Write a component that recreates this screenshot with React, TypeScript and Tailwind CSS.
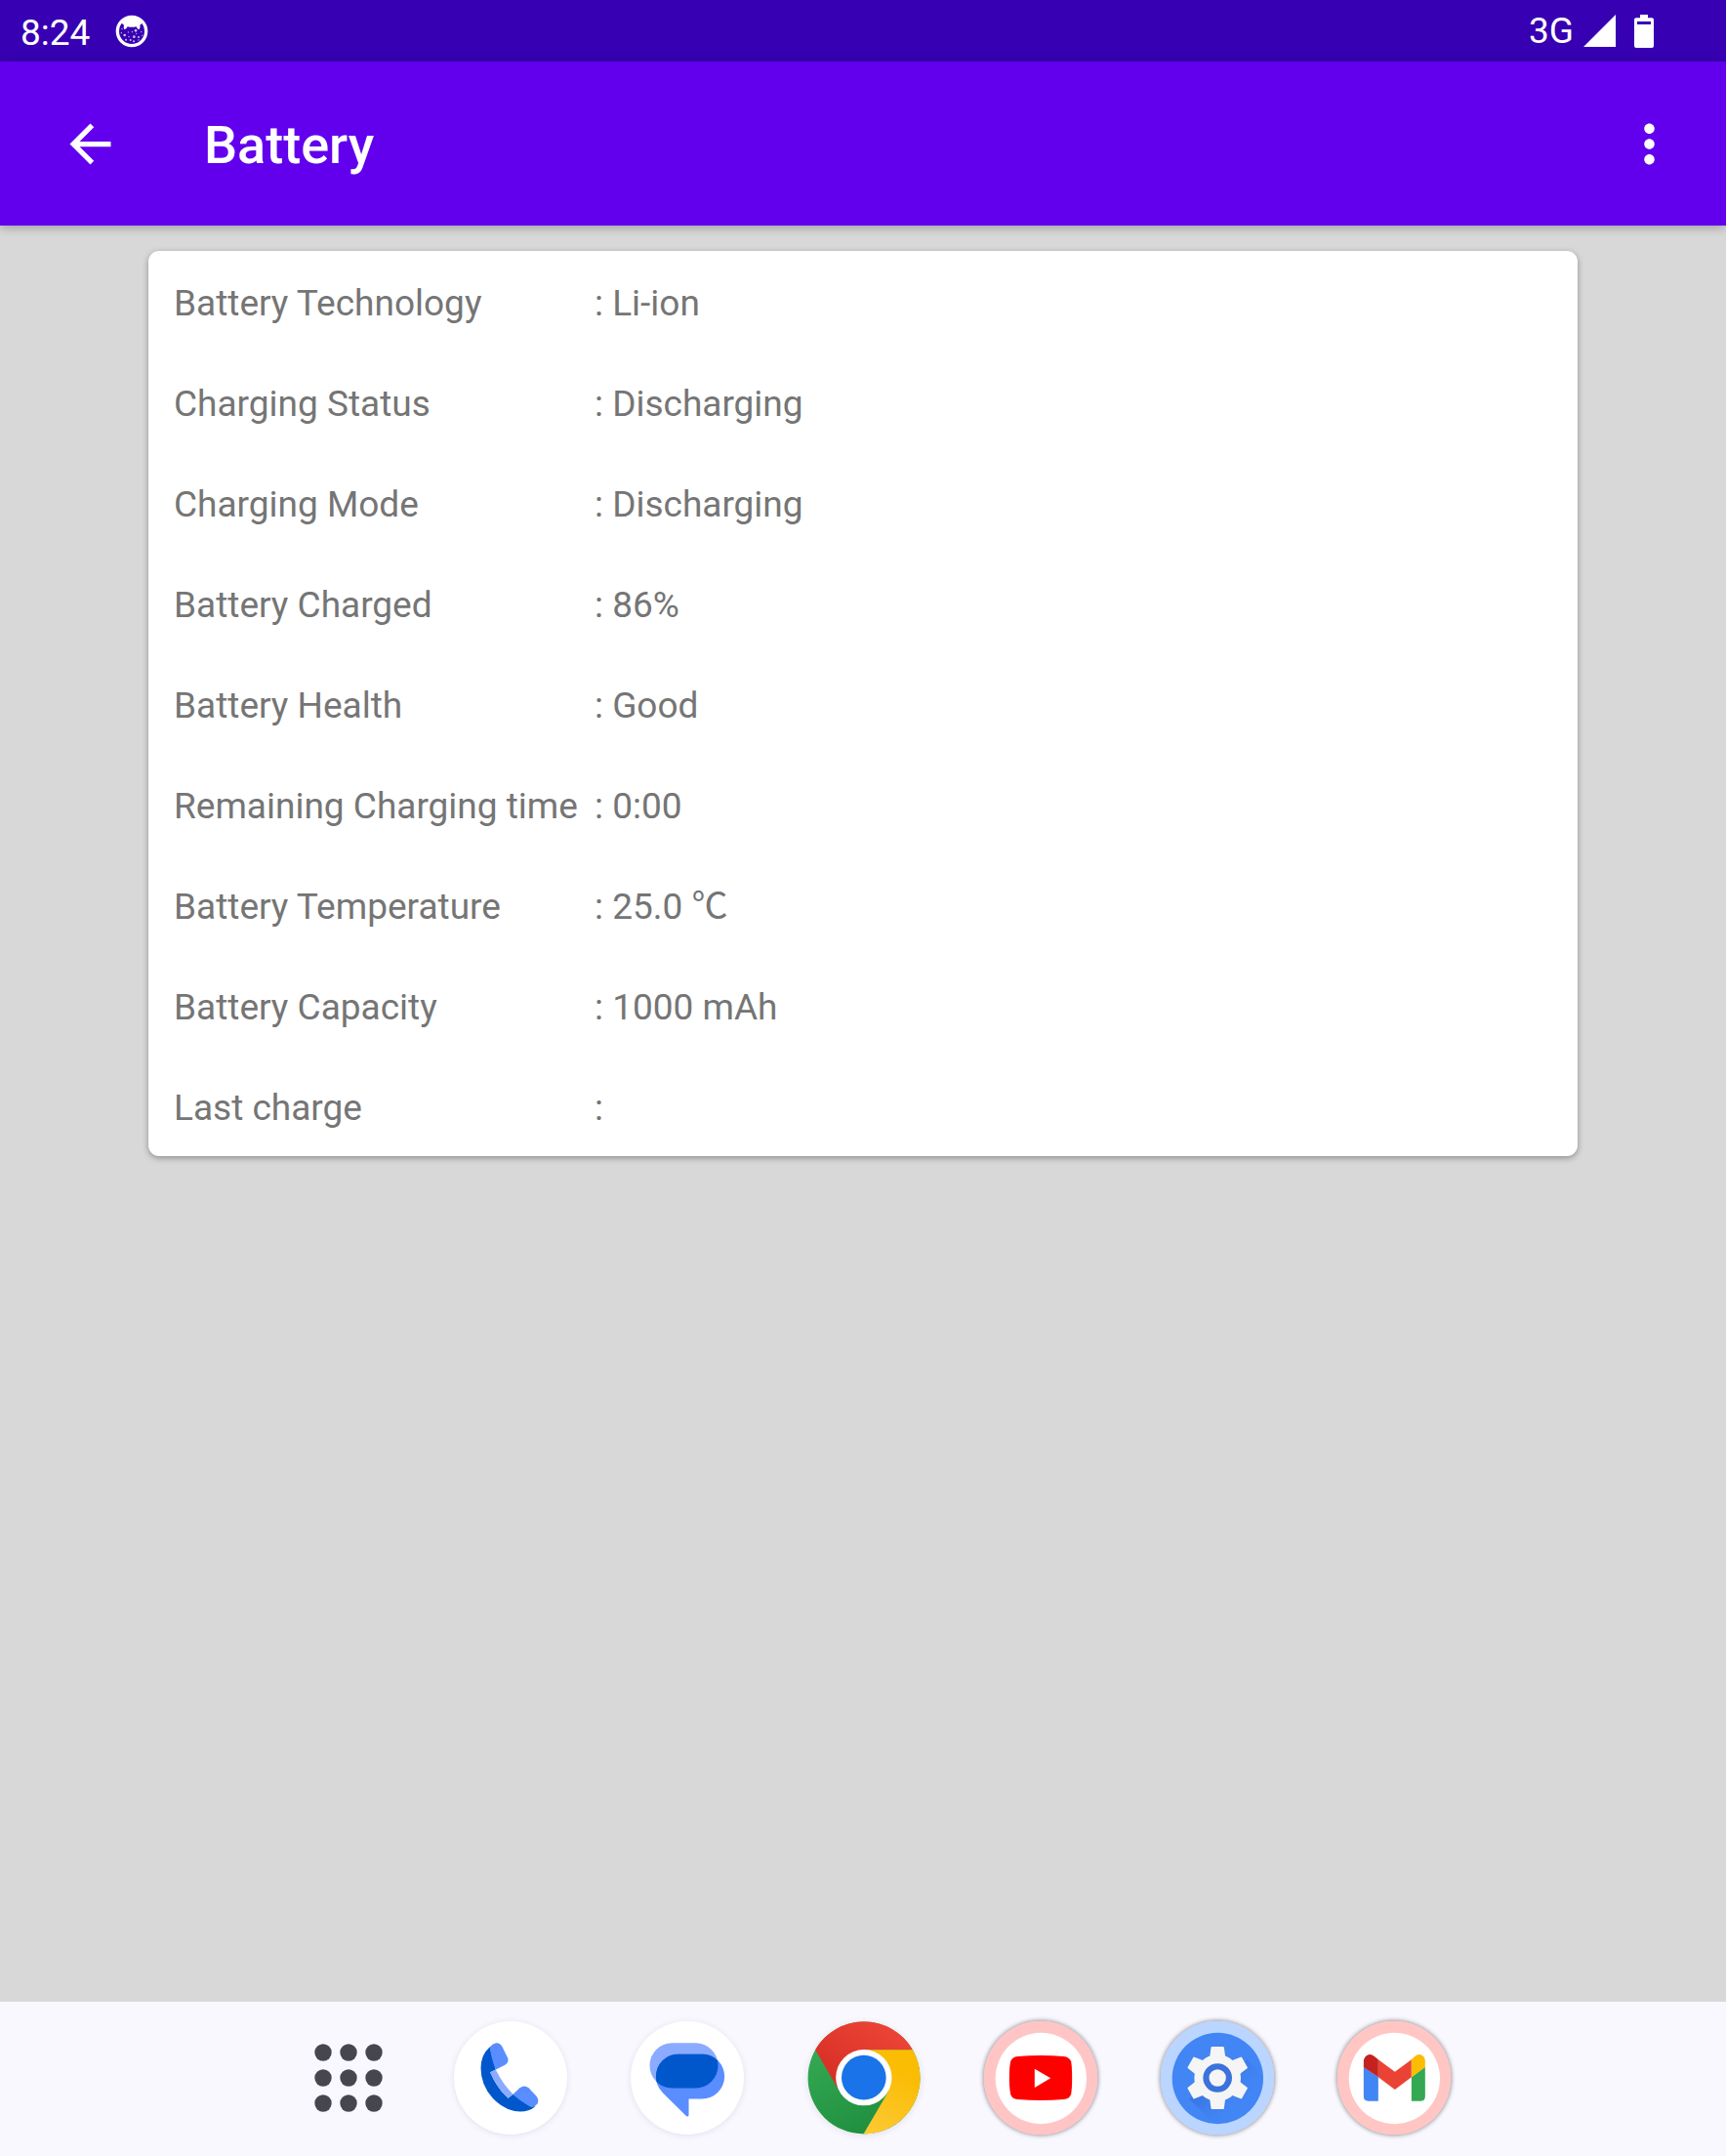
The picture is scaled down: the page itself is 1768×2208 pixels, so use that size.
import type { ReactNode } from "react";

const rows: [string, string][] = [
  ["Battery Technology", "Li-ion"],
  ["Charging Status", "Discharging"],
  ["Charging Mode", "Discharging"],
  ["Battery Charged", "86%"],
  ["Battery Health", "Good"],
  ["Remaining Charging time", "0:00"],
  ["Battery Temperature", "25.0 ℃"],
  ["Battery Capacity", "1000 mAh"],
  ["Last charge", ""],
];

function DebugIcon() {
  const specks = [
    [376, 100, 2], [386, 107, 4], [397, 98, 2], [409, 97, 2], [420, 93, 4], [437, 97, 2],
    [399, 112, 2], [415, 112, 4], [429, 113, 3], [390, 121, 3], [404, 122, 3], [422, 102, 2],
    [414, 126, 3], [429, 122, 2], [378, 88, 2], [440, 108, 2],
  ];
  return (
    <svg viewBox="357 44 102 102" className="size-[34px]" aria-hidden="true">
      <circle cx="408" cy="95" r="44" fill="none" stroke="#fff" strokeWidth="10" />
      <path
        d="M369 71 Q384 50 408 50 Q432 50 447 71 L440 70 L433 76 Q435 84 431 90 L425 87 L422 81 Q408 84 395 81 L391 87 L385 90 Q381 84 384 76 L377 70 Z"
        fill="#fff"
      />
      {specks.map(([x, y, r]) => (
        <circle key={`${x}-${y}`} cx={x} cy={y} r={r} fill="#fff" fillOpacity="0.75" />
      ))}
    </svg>
  );
}

function PhoneIcon() {
  return (
    <svg viewBox="493.5 91.5 348 348" className="size-full" aria-hidden="true">
      <path
        d="M604 170 Q576 194 576 236 Q576 286 612 327 Q650 368 697 369 Q724 369 744 353 L728 353 L675 316 L660 328 Q625 296 605 248 L622 240 Z"
        fill="#0057cc"
      />
      <path d="M605 248 L622 240 Q641 282 675 316 L660 328 Q625 296 605 248 Z" fill="#8aabff" />
      <path d="M604 170 Q607 203 622 240 L650 226 Q663 218 659 205 L642 170 Q635 157 623 158 Q613 159 604 170 Z" fill="#5a8dff" />
      <path d="M675 316 L696 296 Q710 286 723 296 L747 322 Q756 334 750 345 Q742 356 728 353 Q700 340 675 316 Z" fill="#5a8dff" />
    </svg>
  );
}

function MessagesIcon() {
  const front =
    "M193 162 H266 A69 69 0 0 1 266 300 H225 V350 Q224 356 218 353 L145 281 Q124 260 124 231 A69 69 0 0 1 193 162 Z";
  return (
    <svg viewBox="46.5 61.5 348 348" className="size-full" aria-hidden="true">
      <clipPath id="front-bubble">
        <path d={front} />
      </clipPath>
      <rect x="105" y="128" width="210" height="139" rx="69" fill="#8aabff" />
      <path d={front} fill="#5a8dff" />
      <rect x="105" y="128" width="210" height="139" rx="69" fill="#0057cc" clipPath="url(#front-bubble)" />
    </svg>
  );
}

function ChromeIcon() {
  return (
    <svg viewBox="49.5 61.5 348 348" className="size-full" aria-hidden="true">
      <defs>
        <linearGradient id="chrome-red" x1="0" y1="1" x2="1" y2="0">
          <stop offset="0.2" stopColor="#d93025" />
          <stop offset="0.8" stopColor="#ea4335" />
        </linearGradient>
        <linearGradient id="chrome-green" x1="0.2" y1="0.2" x2="0.6" y2="1">
          <stop offset="0" stopColor="#34a853" />
          <stop offset="1" stopColor="#1e8e3e" />
        </linearGradient>
        <linearGradient id="chrome-yellow" x1="0.2" y1="1" x2="0.6" y2="0">
          <stop offset="0" stopColor="#fcc934" />
          <stop offset="0.8" stopColor="#fbbc04" />
        </linearGradient>
      </defs>
      <circle cx="223.5" cy="235.5" r="172.5" fill="url(#chrome-green)" />
      <path d="M74 149 A172.5 172.5 0 0 1 373 149 H223.5 V235.5 L149 278.5 Z" fill="url(#chrome-red)" />
      <path d="M373 149 A172.5 172.5 0 0 1 222 408 L298 278.5 L223.5 235.5 V149 Z" fill="url(#chrome-yellow)" />
      <circle cx="223" cy="234.5" r="86" fill="#fff" />
      <circle cx="223" cy="234.5" r="68.5" fill="#1a73e8" />
    </svg>
  );
}

function YouTubeIcon() {
  return (
    <svg viewBox="51.5 60 348 348" className="size-full overflow-visible" aria-hidden="true">
      <circle cx="225.5" cy="234" r="175" fill="#ffc5c5" />
      <circle cx="226.5" cy="235.5" r="140" fill="#fff" />
      <path
        d="M129 234 Q129 202 133 184 Q137 170 155 168 Q190 165 226 165 Q262 165 296 168 Q314 170 319 184 Q322 202 322 234 Q322 266 319 284 Q314 298 296 300 Q262 303 226 303 Q190 303 155 300 Q137 298 133 284 Q129 266 129 234 Z"
        fill="#f00"
      />
      <path d="M207 206 L256 235 L207 264 Z" fill="#fff" />
    </svg>
  );
}

function SettingsIcon() {
  const angles = [0, 60, 120, 180, 240, 300];
  return (
    <svg viewBox="54.5 60 348 348" className="size-full overflow-visible" aria-hidden="true">
      <defs>
        <clipPath id="settings-disc">
          <circle cx="229.5" cy="235.5" r="140" />
        </clipPath>
        <linearGradient id="settings-shade" gradientUnits="userSpaceOnUse" x1="230" y1="235" x2="310" y2="315">
          <stop offset="0" stopColor="#3367d6" stopOpacity="0.5" />
          <stop offset="1" stopColor="#4285f4" stopOpacity="0" />
        </linearGradient>
      </defs>
      <circle cx="228.5" cy="234" r="175" fill="#bad5ff" />
      <circle cx="229.5" cy="235.5" r="140" fill="#4285f4" />
      <path d="M320 178 L420 278 L270 420 L140 298 Z" fill="url(#settings-shade)" clipPath="url(#settings-disc)" />
      <circle cx="229" cy="234" r="60" fill="#3c72dc" />
      <g fill="#f5f5f5" stroke="#f5f5f5" strokeLinejoin="round" strokeWidth="6">
        {angles.map((a) => (
          <path key={a} d="M212 141 H246 L250 170 L262 186 H196 L208 170 Z" transform={`rotate(${a} 229 234)`} />
        ))}
      </g>
      <circle cx="229" cy="234" r="58" fill="none" stroke="#f5f5f5" strokeWidth="27" />
      <circle cx="229" cy="234" r="26" fill="#f5f5f5" />
    </svg>
  );
}

function GmailIcon() {
  return (
    <svg viewBox="57.5 60 348 348" className="size-full overflow-visible" aria-hidden="true">
      <circle cx="231.5" cy="234" r="175" fill="#ffc6c3" />
      <circle cx="232.5" cy="235.5" r="140" fill="#fff" />
      <path d="M138 200 L183 232 V305 H152 Q138 305 138 291 Z" fill="#4285f4" />
      <path d="M327 200 L285 232 V305 H314 Q327 305 327 291 Z" fill="#34a853" />
      <path d="M183 178 L234 215 L285 178 V232 L234 270 L183 232 Z" fill="#ea4335" />
      <path d="M138 201 V184 Q139 166 155 162 Q163 161 171 168 L183 178 V232 Z" fill="#c5221f" />
      <path d="M327 201 V184 Q327 166 311 162 Q303 161 294 169 L285 178 V232 Z" fill="#fbbc04" />
    </svg>
  );
}

const plain = "shadow-[0_1px_6px_rgba(60,60,90,0.12)]";
const ringed = "shadow-[0_0_4px_1px_rgba(0,0,0,0.4)]";

const apps: { name: string; icon: ReactNode; shadow: string }[] = [
  { name: "Phone", icon: <PhoneIcon />, shadow: plain },
  { name: "Messages", icon: <MessagesIcon />, shadow: plain },
  { name: "Chrome", icon: <ChromeIcon />, shadow: plain },
  { name: "YouTube", icon: <YouTubeIcon />, shadow: ringed },
  { name: "Settings", icon: <SettingsIcon />, shadow: ringed },
  { name: "Gmail", icon: <GmailIcon />, shadow: ringed },
];

export default function App() {
  return (
    <div className="flex min-h-screen flex-col bg-[#d8d8d8] font-['Roboto','Noto_Sans_CJK_JP',sans-serif]">
      <div className="flex h-[63px] items-center justify-between bg-[#3700b3] pr-[74px] pl-[21px] text-[37px] leading-[62px] text-white">
        <div className="flex items-center gap-[26px]">
          <span className="pt-1">8:24</span>
          <DebugIcon />
        </div>
        <div className="flex items-center">
          <span>3G</span>
          <svg viewBox="366 42 99 99" className="ml-[10px] size-[33px]" aria-hidden="true">
            <path d="M465 42 V141 H366 Z" fill="#fff" />
          </svg>
          <svg viewBox="522 42 60 102" className="ml-[19px] h-[34px] w-5" aria-hidden="true">
            <path
              fill="#fff"
              fillRule="evenodd"
              d="M540 42 H564 V52 H576 Q582 52 582 58 V138 Q582 144 576 144 H528 Q522 144 522 138 V58 Q522 52 528 52 H540 Z M531 63 V72 H573 V63 Z"
            />
          </svg>
        </div>
      </div>

      <header className="flex h-[168px] items-center bg-[#6200ee] pr-[47px] pl-[61px] text-white shadow-[0_2px_10px_rgba(0,0,0,0.28)]">
        <button type="button" aria-label="Back" className="size-[63px]">
          <svg viewBox="0 0 24 24" fill="currentColor" aria-hidden="true">
            <path d="M20 11H7.83l5.59-5.59L12 4l-8 8 8 8 1.41-1.41L7.83 13H20v-2z" />
          </svg>
        </button>
        <h1 className="ml-[85px] flex-1 pt-1 text-[54px] leading-[60px] font-medium">Battery</h1>
        <button type="button" aria-label="More options" className="size-[63px]">
          <svg viewBox="0 0 24 24" fill="currentColor" aria-hidden="true">
            <path d="M12 8c1.1 0 2-.9 2-2s-.9-2-2-2-2 .9-2 2 .9 2 2 2zm0 2c-1.1 0-2 .9-2 2s.9 2 2 2 2-.9 2-2-.9-2-2-2zm0 6c-1.1 0-2 .9-2 2s.9 2 2 2 2-.9 2-2-.9-2-2-2z" />
          </svg>
        </button>
      </header>

      <main className="flex-1 px-6 pt-[26px]">
        <div className="mx-auto max-w-[1464px] rounded-[11px] bg-white shadow-[0_2px_6px_rgba(0,0,0,0.35)]">
          <table className="w-full text-left text-[37px] leading-[43px] text-[#757575]">
            <tbody>
              {rows.map(([label, value]) => (
                <tr key={label} className="h-[103px]">
                  <th scope="row" className="w-[457px] pt-1 pl-[26px] font-normal whitespace-nowrap">
                    {label}
                  </th>
                  <td className="pt-1">: {value}</td>
                </tr>
              ))}
            </tbody>
          </table>
        </div>
      </main>

      <nav aria-label="Taskbar" className="flex h-[158px] items-center justify-center bg-[#f9f8ff] pb-0.5">
        <button type="button" aria-label="All apps" className="mr-[34px] flex w-[148px] justify-center">
          <svg viewBox="0 0 70 70" className="size-[70px]" fill="#46464f" aria-hidden="true">
            {[9, 35, 61].map((y) => [9, 35, 61].map((x) => <circle key={`${x}-${y}`} cx={x} cy={y} r="8.7" />))}
          </svg>
        </button>
        <div className="flex gap-[65px]">
          {apps.map(({ name, icon, shadow }) => (
            <button key={name} type="button" aria-label={name} className={`size-[116px] rounded-full bg-white ${shadow}`}>
              {icon}
            </button>
          ))}
        </div>
      </nav>
    </div>
  );
}
